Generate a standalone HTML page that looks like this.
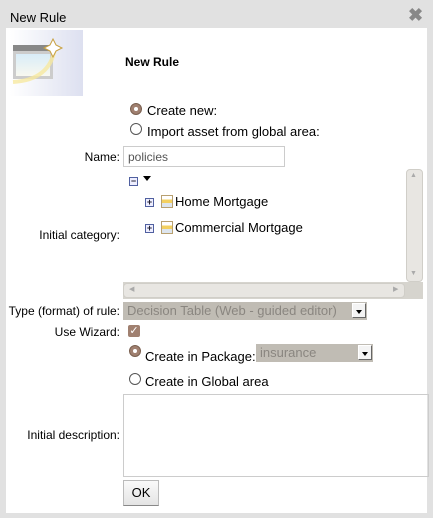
<!DOCTYPE html>
<html><head><style>
*{margin:0;padding:0;box-sizing:border-box}
body{width:433px;height:518px;background:#e1e1e1;font-family:"Liberation Sans",sans-serif;font-size:13px;color:#000;position:relative;overflow:hidden}
.a{position:absolute;white-space:nowrap}
.lbl{position:absolute;right:313px;font-size:12px;white-space:nowrap}
.radio{position:absolute;width:12px;height:12px;border:1px solid #555;border-radius:50%;background:#fff}
.radio.on{background:#a08070;border-color:#7a6050}
.radio.on::after{content:"";position:absolute;left:3px;top:3px;width:4px;height:4px;border-radius:50%;background:#fff}
.pm{position:absolute;width:9px;height:9px;border:1px solid #5060a0;background:#eef;font-size:9px;line-height:7px;text-align:center;color:#223;font-weight:bold}
.fold{position:absolute;width:12px;height:13px;border:1px solid #b8a070;background:linear-gradient(#fff 0 30%,#f3d060 30% 62%,#dde5ee 62%)}
.sel{position:absolute;background:#c0bcb4;color:#8a8680;font-size:13px;padding-left:4px;line-height:17px}
.dd{position:absolute;right:1px;top:1px;width:14px;height:15px;background:#f4f4f4;border:1px solid #666;border-top-color:#fff;border-left-color:#fff}
.dd::after{content:"";position:absolute;left:3px;top:6px;border:3px solid transparent;border-top:4px solid #000}
</style></head><body>
<div class="a" style="left:6px;top:6px;width:421px;height:22px;background:#e1e1e1"></div>
<div class="a" style="left:10px;top:10px;font-size:13px">New Rule</div>
<div class="a" style="left:408px;top:5px;font-size:18px;color:#888;font-weight:bold">✖</div>
<div class="a" style="left:6px;top:28px;width:421px;height:485px;background:#fff"></div>
<svg class="a" style="left:10px;top:30px" width="73" height="66" viewBox="0 0 73 66">
<defs><linearGradient id="g" x1="0" x2="1"><stop offset="0" stop-color="#fff"/><stop offset="1" stop-color="#dde0f0"/></linearGradient>
<linearGradient id="w" x1="0" y1="0" x2="0" y2="1"><stop offset="0" stop-color="#d8ecf8"/><stop offset="1" stop-color="#f8f8f0"/></linearGradient></defs>
<rect width="73" height="66" fill="url(#g)"/>
<rect x="3" y="15" width="40" height="6" fill="#888"/>
<rect x="3" y="21" width="40" height="28" fill="#ccc"/>
<rect x="6" y="24" width="34" height="22" fill="url(#w)"/>
<path d="M3 52 Q40 50 45 18" stroke="#f6e8a0" stroke-width="4" fill="none" opacity=".8"/>
<path d="M43 9 L46 15 L52 18 L46 21 L43 27 L40 21 L34 18 L40 15Z" fill="#fff" stroke="#c8a040"/>
</svg>
<div class="a" style="left:125px;top:55px;font-weight:bold;font-size:12px">New Rule</div>
<div class="radio on" style="left:130px;top:103px"></div>
<div class="a" style="left:147px;top:103px">Create new:</div>
<div class="radio" style="left:130px;top:123px"></div>
<div class="a" style="left:147px;top:124px">Import asset from global area:</div>
<div class="lbl" style="top:150px">Name:</div>
<div class="a" style="left:123px;top:146px;width:162px;height:21px;border:1px solid #ccc;color:#555;font-size:12px;padding:3px 4px">policies</div>
<div class="lbl" style="top:228px">Initial category:</div>
<div class="a" style="left:123px;top:169px;width:300px;height:130px;background:#fff"></div>
<div class="a" style="left:406px;top:169px;width:17px;height:113px;background:#e8e6e2;border:1px solid #d0cec8;border-radius:4px"></div>
<div class="a" style="left:410px;top:172px;font-size:7px;color:#aaa">▲</div>
<div class="a" style="left:410px;top:270px;font-size:7px;color:#aaa">▼</div>
<div class="a" style="left:123px;top:282px;width:300px;height:17px;background:#d6d4ce"></div>
<div class="a" style="left:123px;top:283px;width:282px;height:15px;background:#e8e6e2;border:1px solid #d0cec8;border-radius:4px"></div>
<div class="a" style="left:129px;top:285px;font-size:7px;color:#aaa">◀</div>
<div class="a" style="left:393px;top:285px;font-size:7px;color:#aaa">▶</div>
<div class="pm" style="left:129px;top:177px">−</div>
<div class="a" style="left:143px;top:176px;border:4px solid transparent;border-top:5px solid #000"></div>
<div class="pm" style="left:145px;top:198px">+</div>
<div class="fold" style="left:161px;top:195px"></div>
<div class="a" style="left:175px;top:194px">Home Mortgage</div>
<div class="pm" style="left:145px;top:224px">+</div>
<div class="fold" style="left:161px;top:221px"></div>
<div class="a" style="left:175px;top:220px">Commercial Mortgage</div>
<div class="lbl" style="top:304px">Type (format) of rule:</div>
<div class="sel" style="left:123px;top:302px;width:244px;height:18px">Decision Table (Web - guided editor)<div class="dd"></div></div>
<div class="lbl" style="top:325px">Use Wizard:</div>
<div class="a" style="left:128px;top:325px;width:12px;height:12px;background:#a08070;border-radius:2px;color:#fff;font-size:11px;line-height:12px;text-align:center">✓</div>
<div class="radio on" style="left:129px;top:345px"></div>
<div class="a" style="left:145px;top:349px">Create in Package:</div>
<div class="sel" style="left:256px;top:344px;width:117px;height:18px">insurance<div class="dd"></div></div>
<div class="radio" style="left:129px;top:373px"></div>
<div class="a" style="left:145px;top:374px">Create in Global area</div>
<div class="lbl" style="top:428px">Initial description:</div>
<div class="a" style="left:123px;top:394px;width:306px;height:83px;border:1px solid #ccc"></div>
<div class="a" style="left:123px;top:480px;width:36px;height:26px;border:1px solid #bbb;border-bottom-color:#888;background:linear-gradient(#fafafa,#e4e4e4);text-align:center;line-height:24px">OK</div>
</body></html>
